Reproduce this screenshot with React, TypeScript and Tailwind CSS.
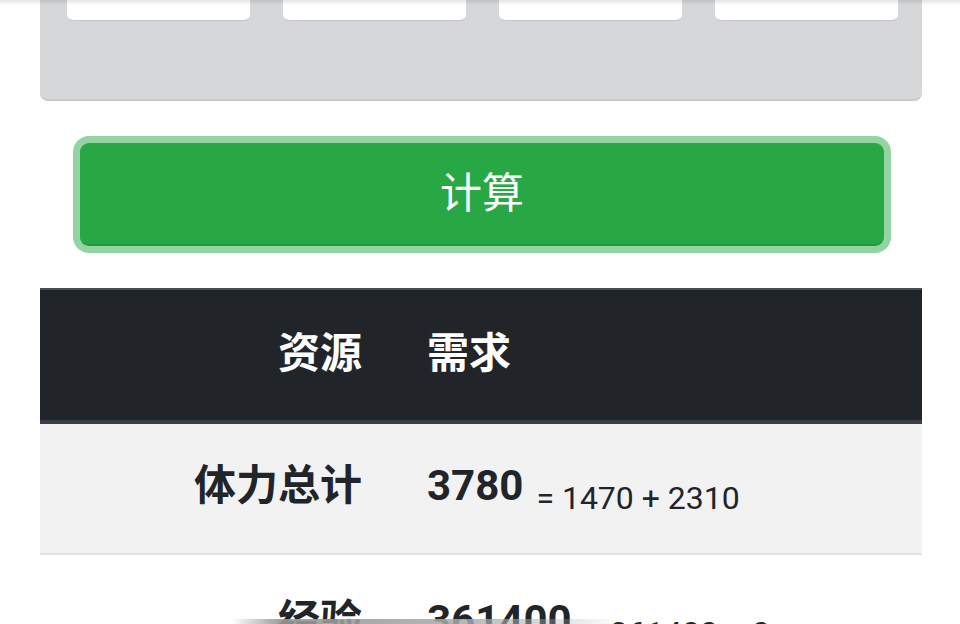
import React from "react";

const font = {
  fontFamily: "Roboto, 'Noto Sans CJK SC', 'Noto Sans', sans-serif",
};

type Row = { label: string; total: string; detail: string; striped: boolean };

const rows: Row[] = [
  { label: "体力总计", total: "3780", detail: "= 1470 + 2310", striped: true },
  { label: "经验", total: "361400", detail: "= 361400 + 0", striped: false },
];

export default function App() {
  return (
    <div
      className="relative w-[960px] h-[624px] overflow-hidden bg-white text-[#212529]"
      style={font}
    >
      <div className="ml-10 w-[882px]">
        {/* input panel (scrolled up, only its bottom is visible) */}
        <div className="h-[101px] rounded-b-[8px] bg-[#d6d7d9] border-b-2 border-[#c9cacc] grid grid-cols-4 gap-x-[33px] pl-[27px] pr-[24px] items-start">
          <div className="h-[21px] rounded-b-[6px] bg-white border-b border-[#c4c5c7]" />
          <div className="h-[21px] rounded-b-[6px] bg-white border-b border-[#c4c5c7]" />
          <div className="h-[21px] rounded-b-[6px] bg-white border-b border-[#c4c5c7]" />
          <div className="h-[21px] rounded-b-[6px] bg-white border-b border-[#c4c5c7]" />
        </div>

        {/* calculate button with focus ring */}
        <button
          type="button"
          className="mt-[42px] ml-10 w-[804px] h-[103px] rounded-[9px] bg-[#28a745] border-b-2 border-[#23963e] text-white text-[42px] leading-none shadow-[0_0_0_7px_#94d3a2] flex items-center justify-center"
          style={font}
        >
          计算
        </button>

        {/* result table */}
        <div className="mt-[42px]">
          <div className="grid grid-cols-[355px_1fr] bg-[#212529] border-t-2 border-[#454d55] border-b-4 border-b-[#3b4046] text-white font-bold text-[42px] leading-[63px]">
            <div className="h-[130px] flex items-center justify-end pr-[33px] pb-[3px]">资源</div>
            <div className="h-[130px] flex items-center pl-[32px] pb-[3px]">需求</div>
          </div>
          {rows.map((r, i) => (
            <div
              key={r.label}
              className={
                "grid grid-cols-[355px_1fr] " +
                (r.striped ? "bg-[#f2f2f2]" : "bg-white") +
                (i > 0 ? " border-t-2 border-[#dee2e6] pt-[4px]" : " pb-[6px]")
              }
            >
              <div className="h-[123px] flex items-center justify-end pr-[33px] text-[42px] font-bold leading-[63px]">
                {r.label}
              </div>
              <div className="h-[123px] flex items-center pl-[32px] whitespace-nowrap">
                <span className="text-[42px] font-bold leading-[63px]">{r.total}</span>
                <span className="ml-[13px] text-[32px] leading-[40px] translate-y-[12px]">
                  {r.detail}
                </span>
              </div>
            </div>
          ))}
        </div>
      </div>

      {/* shadow from the fixed header above */}
      <div className="pointer-events-none absolute inset-x-0 top-0 h-[5px] bg-gradient-to-b from-black/10 to-transparent" />
      {/* shadow of the floating bar below */}
      <div className="pointer-events-none absolute bottom-0 left-[232px] w-[390px] h-[5px] bg-[linear-gradient(to_right,rgba(150,150,150,0),rgba(150,150,150,0.9)_12%,rgba(170,170,170,0.85)_60%,rgba(190,190,190,0))]" />
    </div>
  );
}
